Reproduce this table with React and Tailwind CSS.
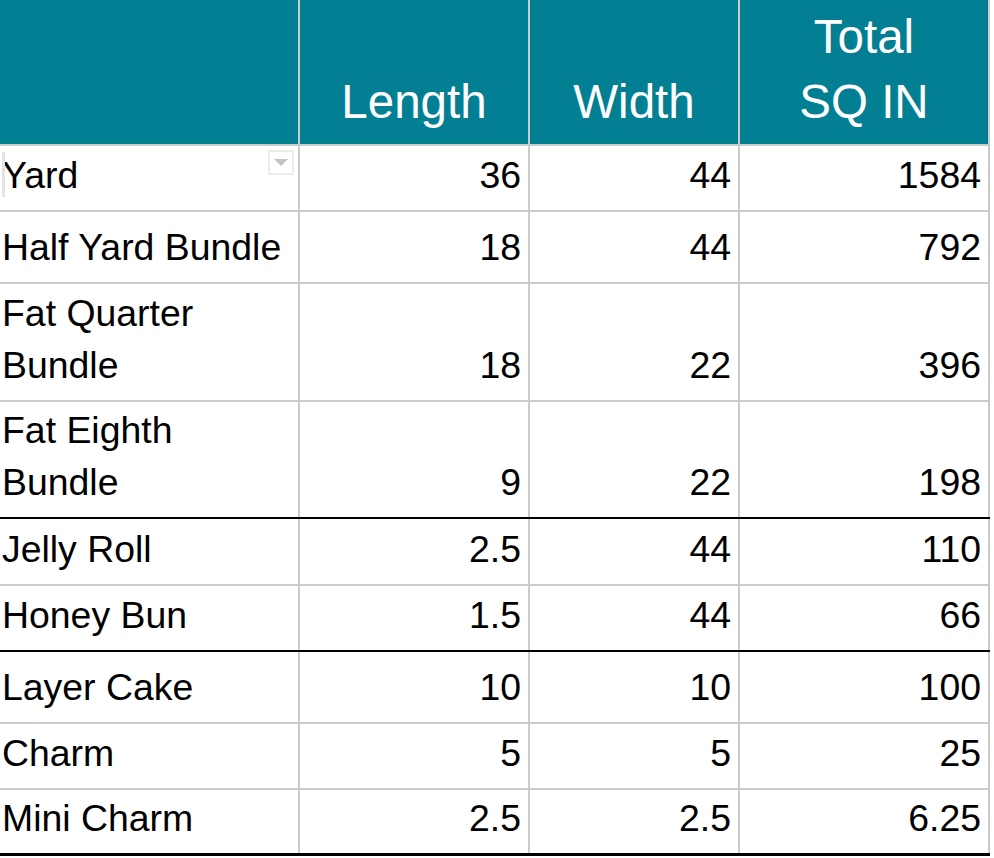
import React from 'react';

const rows = [
  { name: 'Yard', length: '36', width: '44', total: '1584', h: 'h-[66px]', line: 'border-b-2 border-b-[#cbcbcb]', menu: true },
  { name: 'Half Yard Bundle', length: '18', width: '44', total: '792', h: 'h-[72px]', line: 'border-b-2 border-b-[#cbcbcb]' },
  { name: 'Fat Quarter Bundle', length: '18', width: '22', total: '396', h: 'h-[118px]', line: 'border-b-2 border-b-[#cbcbcb]' },
  { name: 'Fat Eighth Bundle', length: '9', width: '22', total: '198', h: 'h-[117px]', line: 'border-b-2 border-b-black' },
  { name: 'Jelly Roll', length: '2.5', width: '44', total: '110', h: 'h-[67px]', line: 'border-b-2 border-b-[#cbcbcb]' },
  { name: 'Honey Bun', length: '1.5', width: '44', total: '66', h: 'h-[66px]', line: 'border-b-2 border-b-black' },
  { name: 'Layer Cake', length: '10', width: '10', total: '100', h: 'h-[72px]', line: 'border-b-2 border-b-[#cbcbcb]' },
  { name: 'Charm', length: '5', width: '5', total: '25', h: 'h-[66px]', line: 'border-b-2 border-b-[#cbcbcb]' },
  { name: 'Mini Charm', length: '2.5', width: '2.5', total: '6.25', h: 'h-[66px]', line: 'border-b-[3px] border-b-black' },
];

const NumCell = ({ value, w }) => (
  <div className={`${w} h-full flex items-end justify-end border-r-2 border-r-[#cbcbcb] pr-[7px] pb-[9px] leading-[52px]`}>
    {value}
  </div>
);

export default function App() {
  return (
    <div className="w-[994px] h-[858px] bg-white overflow-hidden" style={{ fontFamily: '"Liberation Sans", Arial, sans-serif' }}>
      <div className="w-[990px]">
        {/* header */}
        <div className="flex h-[146px] bg-[#037f93] text-white text-[47.5px] leading-[65px] border-b-2 border-b-[#cbcbcb]">
          <div className="w-[300px] h-full border-r-2 border-r-[#cbcbcb]" />
          <div className="w-[230px] h-full flex items-end justify-center text-center pb-[10px] border-r-2 border-r-[#cbcbcb]">Length</div>
          <div className="w-[210px] h-full flex items-end justify-center text-center pb-[10px] border-r-2 border-r-[#cbcbcb]">Width</div>
          <div className="w-[250px] h-full flex items-end justify-center text-center pb-[10px] border-r-2 border-r-[#cbcbcb]">
            <span>Total<br />SQ IN</span>
          </div>
        </div>

        {rows.map((r) => (
          <div key={r.name} className={`flex ${r.h} ${r.line} text-black text-[37.4px]`}>
            <div className="relative w-[300px] h-full flex items-end border-r-2 border-r-[#cbcbcb] pl-[2px] pr-[9px] pb-[9px] leading-[52px]">
              {r.menu && (
                <>
                  <div className="absolute left-[2px] top-[6px] w-[3px] h-[45px] bg-[#e3e3e3]" />
                  <div className="absolute left-[268px] top-[4px] w-[26px] h-[25px] border-2 border-[#ececec] flex items-center justify-center">
                    <svg width="14" height="7" viewBox="0 0 14 7">
                      <path d="M0 0 L14 0 L7 7 Z" fill="#c4c4c4" />
                    </svg>
                  </div>
                </>
              )}
              <span>{r.name}</span>
            </div>
            <NumCell value={r.length} w="w-[230px]" />
            <NumCell value={r.width} w="w-[210px]" />
            <NumCell value={r.total} w="w-[250px]" />
          </div>
        ))}
      </div>
    </div>
  );
}
